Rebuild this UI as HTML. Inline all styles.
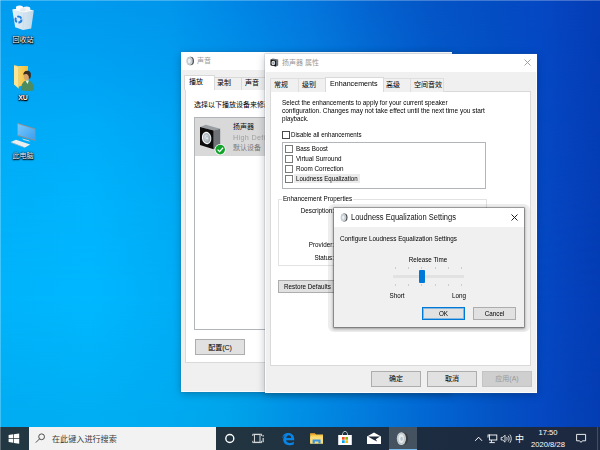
<!DOCTYPE html>
<html lang="zh-CN">
<head>
<meta charset="utf-8">
<title>Desktop</title>
<style>
*{box-sizing:border-box;margin:0;padding:0}
html,body{width:600px;height:450px;overflow:hidden;background:#0a6fd8}
body{font-family:"Liberation Sans","Noto Sans CJK SC",sans-serif;font-size:7px;color:#1a1a1a;position:relative}
.abs{position:absolute}
svg{position:absolute;overflow:visible}
#wall{position:absolute;left:0;top:0;width:600px;height:450px}
.t{position:absolute;white-space:nowrap;line-height:9px;font-size:7px;transform:scaleX(.9);transform-origin:0 0;color:#000}
.t.r{transform-origin:100% 0;text-align:right}
.t.c{transform-origin:50% 0;text-align:center}
.cj{position:absolute;white-space:nowrap;line-height:9px;font-size:7px;color:#000}
.lbl{position:absolute;color:#fff;font-size:7px;line-height:9px;text-align:center;width:46px;text-shadow:0 0 1.5px rgba(0,0,0,1),0 1px 1.5px rgba(0,0,0,1),0 0 1px rgba(0,0,0,1),.5px .5px 1px rgba(0,0,0,.9);white-space:nowrap}
.win{position:absolute;background:#f0f0f0}
.btn{position:absolute;border:1px solid #adadad;background:#e1e1e1}
.cb{position:absolute;width:8px;height:8px;border:1px solid #7a7a7a;background:#fff}
</style>
</head>
<body>
<div id="wall">
<svg width="600" height="450" viewBox="0 0 600 450">
<defs>
<linearGradient id="gt" x1="0" y1="0" x2="1" y2="0"><stop offset="0.0000" stop-color="#009cef"/><stop offset="0.1500" stop-color="#009aee"/><stop offset="0.2833" stop-color="#0096ec"/><stop offset="0.4167" stop-color="#0084e4"/><stop offset="0.5167" stop-color="#0376dc"/><stop offset="0.6167" stop-color="#0364d0"/><stop offset="0.7167" stop-color="#0455c6"/><stop offset="0.8333" stop-color="#034cc2"/><stop offset="0.9000" stop-color="#0548c4"/><stop offset="0.9500" stop-color="#0542bc"/><stop offset="1.0000" stop-color="#043db5"/></linearGradient>
<linearGradient id="gm" x1="0" y1="0" x2="1" y2="0"><stop offset="0.0000" stop-color="#00b4fb"/><stop offset="0.1500" stop-color="#00b8ff"/><stop offset="0.2833" stop-color="#00aef7"/><stop offset="0.3833" stop-color="#00a8f0"/><stop offset="0.5167" stop-color="#0092e8"/><stop offset="0.6167" stop-color="#027ede"/><stop offset="0.7167" stop-color="#0268d4"/><stop offset="0.8333" stop-color="#0452c4"/><stop offset="0.9000" stop-color="#0549c5"/><stop offset="0.9500" stop-color="#0542bc"/><stop offset="1.0000" stop-color="#043db5"/></linearGradient>
<linearGradient id="gb" x1="0" y1="0" x2="1" y2="0"><stop offset="0.0000" stop-color="#00acf2"/><stop offset="0.1500" stop-color="#00aef3"/><stop offset="0.2833" stop-color="#00aaf0"/><stop offset="0.3833" stop-color="#00a4ea"/><stop offset="0.5167" stop-color="#008ce4"/><stop offset="0.6167" stop-color="#027adc"/><stop offset="0.7167" stop-color="#0266d2"/><stop offset="0.8333" stop-color="#0452c4"/><stop offset="0.9000" stop-color="#0548c2"/><stop offset="0.9500" stop-color="#0442b8"/><stop offset="1.0000" stop-color="#043db3"/></linearGradient>
<linearGradient id="va" x1="0" y1="0" x2="0" y2="1"><stop offset="0.0000" stop-color="#fff" stop-opacity="1.000"/><stop offset="0.0133" stop-color="#fff" stop-opacity="1.000"/><stop offset="0.1200" stop-color="#fff" stop-opacity="0.800"/><stop offset="0.2756" stop-color="#fff" stop-opacity="0.400"/><stop offset="0.4533" stop-color="#fff" stop-opacity="0.130"/><stop offset="0.6667" stop-color="#fff" stop-opacity="0.000"/></linearGradient>
<linearGradient id="vb" x1="0" y1="0" x2="0" y2="1"><stop offset="0.6667" stop-color="#fff" stop-opacity="0.000"/><stop offset="0.9200" stop-color="#fff" stop-opacity="1.000"/><stop offset="1.0000" stop-color="#fff" stop-opacity="1.000"/></linearGradient>
<mask id="mka" maskUnits="userSpaceOnUse" x="0" y="0" width="600" height="450"><rect width="600" height="450" fill="url(#va)"/></mask>
<mask id="mkb" maskUnits="userSpaceOnUse" x="0" y="0" width="600" height="450"><rect width="600" height="450" fill="url(#vb)"/></mask>
</defs>
<rect width="600" height="450" fill="url(#gm)"/>
<rect width="600" height="450" fill="url(#gt)" mask="url(#mka)"/>
<rect width="600" height="450" fill="url(#gb)" mask="url(#mkb)"/>
</svg>
</div>

<div class="abs" style="left:0;top:0;width:600px;height:1px;background:rgba(255,255,255,.25)"></div>
<div class="abs" style="left:0;top:0;width:1px;height:427px;background:rgba(255,255,255,.25)"></div>
<!-- desktop icons -->
<svg id="dicons" style="left:0;top:0" width="60" height="165" viewBox="0 0 60 165">
<defs>
<linearGradient id="binG" x1="0" y1="0" x2="1" y2="0"><stop offset="0" stop-color="#f4f8fb"/><stop offset=".55" stop-color="#e3eaf0"/><stop offset="1" stop-color="#cfdbe6"/></linearGradient>
<linearGradient id="scrG" x1="0" y1="0" x2="1" y2="1"><stop offset="0" stop-color="#7cc8fa"/><stop offset="1" stop-color="#3a9ff0"/></linearGradient>
<linearGradient id="fldG" x1="0" y1="0" x2="1" y2="0"><stop offset="0" stop-color="#fbd466"/><stop offset="1" stop-color="#f3bf3c"/></linearGradient>
</defs>
<!-- recycle bin -->
<g>
<path d="M12.3 9.6 L22.5 8 L33.8 10.4 L31.2 28.6 L23 30 L15.2 27.2 Z" fill="url(#binG)" opacity=".93"/>
<path d="M12.3 9.6 L22.5 8 L33.8 10.4 L24 12.4 Z" fill="#ffffff" opacity=".85"/>
<ellipse cx="19.5" cy="8" rx="3.6" ry="2.4" fill="#fff"/>
<ellipse cx="26.5" cy="8.8" rx="3.8" ry="2.3" fill="#f3f6f8"/>
<ellipse cx="23" cy="9.8" rx="3" ry="1.8" fill="#e6ebef"/>
<path d="M24 12.4 L23 30" stroke="#c9d5e0" stroke-width=".5" fill="none"/>
<circle cx="18.5" cy="19.6" r="3" fill="none" stroke="#1f7fe6" stroke-width="2" stroke-dasharray="4.7 1.58"/>
</g>
<!-- user folder -->
<g>
<path d="M18.2 66 L28 66 L28 85 L18.2 86.5 Z" fill="url(#fldG)"/>
<path d="M14 65.2 L18.6 66.4 L18.6 88.6 L14 84.6 Z" fill="#fde594"/>
<path d="M14 65.2 L18.6 66.4 L18.6 88.6" fill="none" stroke="#f0c552" stroke-width=".4"/>
<path d="M21 90.2 C21 84 23.5 80.2 27.4 80.2 C31.4 80.2 34 84 34 90.2 C30 91.2 25 91.2 21 90.2 Z" fill="#4d8c5e"/>
<path d="M25.6 80.6 L27.4 84 L29 80.6 Z" fill="#eef3ee"/>
<ellipse cx="26.8" cy="76.4" rx="3.1" ry="3.6" fill="#d7a46a"/>
<path d="M23.4 75 C23 72.4 25 70.6 27.4 70.8 C30.4 70.8 31.6 73.4 30.6 77.6 C30 78.6 29.4 79 28.8 79 C29.2 77 28.6 75.2 27.2 74.2 C26 73.8 24.6 74 23.4 75 Z" fill="#3a2c22"/>
</g>
<!-- this pc -->
<g>
<path d="M17 122.8 L35.6 128.6 L35.6 141 L17 135.8 Z" fill="#8c8f92"/>
<path d="M17.9 124 L34.8 129.3 L34.8 139.8 L17.9 135 Z" fill="url(#scrG)"/>
<path d="M22 138.4 L28.6 140.2 L30.4 141.8 L23.6 140 Z" fill="#d6d9dc"/>
<path d="M10.8 142 L16 139.8 L30.2 144.6 L25 147.4 Z" fill="#eceeef"/>
<path d="M10.8 142 L25 147.4 L25 148 L10.8 142.7 Z" fill="#b9bdc1"/>
</g>
</svg>

<div class="lbl" style="left:0;top:35px">回收站</div>
<div class="lbl" style="left:0;top:93px;font-weight:bold">XU</div>
<div class="lbl" style="left:0;top:151px">此电脑</div>

<!-- Sound window -->
<div class="win" id="w1" style="left:181px;top:52px;width:271px;height:340px;box-shadow:inset 0 0 0 1px #fbfbfb,0 0 0 .5px rgba(70,100,140,.3),0 2px 8px rgba(0,0,0,.25)">
  <div class="abs" style="left:0;top:0;width:271px;height:18px;background:#fff"></div>
  <svg style="left:4px;top:4px" width="10" height="10" viewBox="0 0 10 10"><ellipse cx="5.4" cy="5" rx="3.6" ry="4.3" fill="#4a4f54"/><ellipse cx="4.5" cy="5" rx="3.2" ry="4.1" fill="#cfd6da"/><ellipse cx="4.3" cy="5" rx="2" ry="2.8" fill="#eef1f3" stroke="#9aa4aa" stroke-width=".4"/></svg>
  <div class="cj" style="left:16px;top:4px;color:#999">声音</div>
  <div class="abs" style="left:4px;top:37px;width:262px;height:274px;background:#fff;border:1px solid #d9d9d9"></div>
  <div class="abs" style="left:33px;top:25px;width:80px;height:13px;border:1px solid #d9d9d9;border-bottom:none;background:#f0f0f0"></div>
  <div class="abs" style="left:60px;top:25px;width:1px;height:13px;background:#d9d9d9"></div>
  <div class="abs" style="left:87px;top:25px;width:1px;height:13px;background:#d9d9d9"></div>
  <div class="abs" style="left:3px;top:23px;width:31px;height:15px;border:1px solid #d9d9d9;border-bottom:none;background:#fff"></div>
  <div class="cj" style="left:8px;top:25px">播放</div>
  <div class="cj" style="left:36px;top:26px">录制</div>
  <div class="cj" style="left:64px;top:26px">声音</div>
  <div class="cj" style="left:13px;top:48px">选择以下播放设备来修改其设置:</div>
  <div class="abs" style="left:13px;top:65px;width:245px;height:213px;border:1px solid #b2b6ba;background:#fff"></div>
  <div class="abs" style="left:14px;top:66px;width:243px;height:38px;background:#d9d9d9"></div>
  
  <svg style="left:17px;top:71px" width="30" height="34" viewBox="198 123 30 34">
  <defs><radialGradient id="coneG" cx=".45" cy=".45" r=".6"><stop offset="0" stop-color="#f4f7f9"/><stop offset=".55" stop-color="#b9c4cb"/><stop offset="1" stop-color="#8a959c"/></radialGradient></defs>
  <path d="M200 127 L205.8 124.8 L220.2 128.8 L213.6 130.6 Z" fill="#9a9ea2"/>
  <path d="M213.6 130.6 L220.2 128.8 L220.2 145.4 L213.6 149.2 Z" fill="#6f7377"/>
  <path d="M200 127 L213.6 130.6 L213.6 149.2 L200 145 Z" fill="#0c0c0c"/>
  <ellipse cx="206.6" cy="138" rx="4.7" ry="6.2" fill="#f2f4f5" transform="rotate(-8 206.6 138)"/>
  <ellipse cx="206.7" cy="138" rx="3.6" ry="5" fill="url(#coneG)" transform="rotate(-8 206.7 138)"/>
  <ellipse cx="207" cy="138.2" rx="1.3" ry="1.8" fill="#e9eef1" stroke="#7f8a91" stroke-width=".4"/>
  <circle cx="220.2" cy="149.6" r="5.6" fill="#fff"/>
  <circle cx="220.2" cy="149.6" r="4.8" fill="#12a32a"/>
  <path d="M217.6 149.6 L219.6 151.6 L223 147.8" fill="none" stroke="#fff" stroke-width="1.3"/>
  </svg>
  <div class="cj" style="left:52px;top:70px;color:#111">扬声器</div>
  <div class="t" style="left:52px;top:81px;color:#a0a0a0;font-size:8px;letter-spacing:.35px">High Definition Audio</div>
  <div class="cj" style="left:52px;top:91px;color:#7a7a7a">默认设备</div>
  <div class="btn" style="left:14px;top:287px;width:50px;height:16px"></div>
  <div class="cj" style="left:14px;width:50px;text-align:center;top:291px">配置(C)</div>
</div>

<!-- Properties window -->
<div class="win" id="w2" style="left:265px;top:54px;width:272px;height:339px;box-shadow:inset 0 0 0 1px #fbfbfb,0 0 0 .5px rgba(70,100,140,.3),0 2px 8px rgba(0,0,0,.25)">
  <div class="abs" style="left:0;top:0;width:272px;height:18px;background:#fff"></div>
  <svg style="left:5px;top:4px" width="9" height="9" viewBox="0 0 9 9"><path d="M0.6 1.6 L2.8 0.4 L8.2 1.4 L8.2 7.4 L6 8.6 L0.6 7.2 Z" fill="#6a6e72"/><path d="M0.6 1.6 L6 2.8 L6 8.6 L0.6 7.2 Z" fill="#141414"/><ellipse cx="3.3" cy="5" rx="1.9" ry="2.3" fill="#dfe4e7"/><ellipse cx="3.4" cy="5" rx="1" ry="1.3" fill="#9aa7ae"/></svg>
  <div class="cj" style="left:17px;top:4px;color:#999">扬声器 属性</div>
  <svg style="left:259px;top:5px" width="7" height="7" viewBox="0 0 7 7"><path d="M0.5 0.5L6.5 6.5M6.5 0.5L0.5 6.5" stroke="#999" stroke-width="0.9" fill="none"/></svg>
  <div class="abs" style="left:5px;top:37px;width:261px;height:275px;background:#fff;border:1px solid #d9d9d9"></div>
  <div class="abs" style="left:5px;top:24px;width:174px;height:14px;border:1px solid #dedede;border-bottom:none;background:#f0f0f0"></div>
  <div class="abs" style="left:33px;top:24px;width:1px;height:14px;background:#dedede"></div>
  <div class="abs" style="left:145px;top:24px;width:1px;height:14px;background:#dedede"></div>
  <div class="abs" style="left:60px;top:23px;width:59px;height:15px;border:1px solid #d9d9d9;border-bottom:none;background:#fff"></div>
  <div class="cj" style="left:9px;top:26px">常规</div>
  <div class="cj" style="left:37px;top:26px">级别</div>
  <div class="t" style="left:65px;top:25px;font-size:7.5px;transform:scaleX(.95)">Enhancements</div>
  <div class="cj" style="left:121px;top:26px">高级</div>
  <div class="cj" style="left:149px;top:26px">空间音效</div>

  <div class="t" style="left:17px;top:45px;line-height:8px;transform:scaleX(.911)">Select the enhancements to apply for your current speaker</div><div class="t" style="left:17px;top:53px;line-height:8px;transform:scaleX(.928)">configuration. Changes may not take effect until the next time you start</div><div class="t" style="left:17px;top:61px;line-height:8px">playback.</div>
  <div class="cb" style="left:17px;top:77px;border-color:#4a4a4a"></div>
  <div class="t" style="left:26px;top:76px;transform:scaleX(.88)">Disable all enhancements</div>
  <div class="abs" style="left:17px;top:88px;width:204px;height:47px;border:1px solid #b2b6ba;background:#fff"></div>
  <div class="abs" style="left:29px;top:120px;width:66px;height:9px;background:#ececec"></div>
  <div class="cb" style="left:20px;top:91px"></div><div class="t" style="left:31px;top:90px">Bass Boost</div>
  <div class="cb" style="left:20px;top:101px"></div><div class="t" style="left:31px;top:100px">Virtual Surround</div>
  <div class="cb" style="left:20px;top:111px"></div><div class="t" style="left:31px;top:110px">Room Correction</div>
  <div class="cb" style="left:20px;top:121px"></div><div class="t" style="left:31px;top:120px;transform:scaleX(.875)">Loudness Equalization</div>

  <div class="abs" style="left:13px;top:145px;width:209px;height:67px;border:1px solid #e2e2e2;background:#fff"></div>
  <div class="t" style="left:17px;top:140px;background:#fff;padding:0 1px">Enhancement Properties</div>
  <div class="t r" style="left:0;width:69px;top:152px">Description:</div>
  
  <div class="t r" style="left:0;width:69px;top:186px">Provider:</div>
  <div class="t r" style="left:0;width:69px;top:199px">Status:</div>
  <div class="btn" style="left:13px;top:226px;width:64px;height:13px"></div>
  <div class="t" style="left:19px;top:228px">Restore Defaults</div>

  <div class="btn" style="left:106px;top:317px;width:50px;height:16px"></div>
  <div class="cj" style="left:106px;width:50px;text-align:center;top:320px">确定</div>
  <div class="btn" style="left:162px;top:317px;width:50px;height:16px"></div>
  <div class="cj" style="left:162px;width:50px;text-align:center;top:320px">取消</div>
  <div class="btn" style="left:217px;top:317px;width:50px;height:16px;border-color:#c4c4c4;background:#cfcfcf"></div>
  <div class="cj" style="left:217px;width:50px;text-align:center;top:320px;color:#999">应用(A)</div>
</div>

<!-- Loudness dialog -->
<div class="abs" style="left:327.5px;top:204px;width:202.5px;height:127.5px;border-radius:6px;background:rgba(0,0,0,.07);filter:blur(.7px)"></div>
<div class="win" id="w3" style="left:334px;top:208px;width:190px;height:119px;box-shadow:0 0 0 .6px rgba(80,80,80,.7),0 1px 2.5px 1px rgba(0,0,0,.35)">
  <div class="abs" style="left:0;top:0;width:190px;height:19px;background:#fff"></div>
  <div class="abs" style="left:0;top:1px;width:190px;height:118px">
  <svg style="left:6px;top:4px" width="8" height="9" viewBox="0 0 8 9"><ellipse cx="4.3" cy="4.5" rx="3.2" ry="4" fill="#3e4348"/><ellipse cx="3.5" cy="4.5" rx="2.9" ry="3.8" fill="#cdd4d8"/><ellipse cx="3.3" cy="4.5" rx="1.7" ry="2.5" fill="#eef1f3" stroke="#9aa4aa" stroke-width=".4"/></svg>
  <div class="t" style="left:17px;top:4px;font-size:8.5px;color:#111;transform:scaleX(.885)">Loudness Equalization Settings</div>
  <svg style="left:177px;top:5px" width="7" height="7" viewBox="0 0 7 7"><path d="M0.5 0.5L6.5 6.5M6.5 0.5L0.5 6.5" stroke="#222" stroke-width="1" fill="none"/></svg>
  <div class="t" style="left:6px;top:25px">Configure Loudness Equalization Settings</div>
  <div class="t c" style="left:59px;width:70px;top:46px">Release Time</div>
  <div class="abs" style="left:61.0px;top:58px;width:1px;height:2px;background:#cdcdcd"></div><div class="abs" style="left:61.0px;top:75px;width:1px;height:2px;background:#cdcdcd"></div><div class="abs" style="left:74.2px;top:58px;width:1px;height:2px;background:#cdcdcd"></div><div class="abs" style="left:74.2px;top:75px;width:1px;height:2px;background:#cdcdcd"></div><div class="abs" style="left:87.4px;top:58px;width:1px;height:2px;background:#cdcdcd"></div><div class="abs" style="left:87.4px;top:75px;width:1px;height:2px;background:#cdcdcd"></div><div class="abs" style="left:100.6px;top:58px;width:1px;height:2px;background:#cdcdcd"></div><div class="abs" style="left:100.6px;top:75px;width:1px;height:2px;background:#cdcdcd"></div><div class="abs" style="left:113.8px;top:58px;width:1px;height:2px;background:#cdcdcd"></div><div class="abs" style="left:113.8px;top:75px;width:1px;height:2px;background:#cdcdcd"></div><div class="abs" style="left:127.0px;top:58px;width:1px;height:2px;background:#cdcdcd"></div><div class="abs" style="left:127.0px;top:75px;width:1px;height:2px;background:#cdcdcd"></div>
  <div class="abs" style="left:59px;top:66px;width:71px;height:3px;background:#e2e2e2;border:0"></div>
  <div class="abs" style="left:84.5px;top:61px;width:6px;height:12.5px;background:#0078d7;border-radius:1px"></div>
  <div class="t c" style="left:50px;width:26px;top:82px">Short</div>
  <div class="t c" style="left:112px;width:26px;top:82px">Long</div>
  <div class="btn" style="left:88px;top:98px;width:43px;height:13px;border-color:#0078d7;box-shadow:inset 0 0 0 1px rgba(0,120,215,.4)"></div>
  <div class="t c" style="left:88px;width:43px;top:100px">OK</div>
  <div class="btn" style="left:139px;top:98px;width:43px;height:13px"></div>
  <div class="t c" style="left:139px;width:43px;top:100px">Cancel</div>
  </div>
</div>

<!-- Taskbar -->
<div class="abs" id="tb" style="left:0;top:427px;width:600px;height:23px;background:linear-gradient(90deg,#223842 0%,#213440 40%,#1c2b40 77%,#1c2840 100%)">
  <div class="abs" style="left:29px;top:0;width:187px;height:23px;background:#f2f2f2"></div>
  <div class="cj" style="left:52px;top:8px;font-size:8.1px;color:#3a3a3a">在此键入进行搜索</div>
  <div class="abs" style="left:389px;top:0;width:28px;height:23px;background:#45525f"></div>
  <div class="abs" style="left:389px;top:22px;width:28px;height:1px;background:#76b9ed"></div>
  <div class="abs" style="left:0;top:0;width:1px;height:23px;background:#5a6a72"></div>
  <svg style="left:0;top:0" width="600" height="23" viewBox="0 427 600 23">
  <!-- start -->
  <path d="M8.6 435 L13.2 434.3 L13.2 438.2 L8.6 438.2 Z M13.9 434.2 L19.2 433.4 L19.2 438.2 L13.9 438.2 Z M8.6 438.9 L13.2 438.9 L13.2 442.8 L8.6 442.1 Z M13.9 438.9 L19.2 438.9 L19.2 443.7 L13.9 442.9 Z" fill="#fff"/>
  <!-- search -->
  <circle cx="41.6" cy="436.8" r="2.9" fill="none" stroke="#3a3a3a" stroke-width=".9"/>
  <path d="M39.5 438.9 L35.8 442.6" stroke="#3a3a3a" stroke-width=".9" fill="none"/>
  <!-- cortana -->
  <circle cx="229.8" cy="438.5" r="4" fill="none" stroke="#fff" stroke-width="1.4"/>
  <!-- task view -->
  <rect x="254.4" y="434.6" width="5.6" height="7.6" fill="none" stroke="#e8e8e8" stroke-width=".9"/>
  <path d="M252.8 434.2 L252.8 436 M252.8 440.8 L252.8 442.6 M261.6 434.2 L261.6 436 M261.6 440.8 L261.6 442.6" stroke="#e8e8e8" stroke-width=".9"/>
  <path d="M252.6 434.2 L261.8 434.2 M252.6 442.6 L261.8 442.6" stroke="#e8e8e8" stroke-width=".8"/>
  <rect x="262.6" y="435.2" width="1.1" height="1.3" fill="#fff"/><rect x="262.6" y="438" width="1.1" height="4.2" fill="#e8e8e8"/>
  <!-- edge -->
  <path d="M282.2 438.4 C282.6 434.8 285.2 433 288.4 433 C291.8 433 294.2 435.4 294.2 439 L294.2 440.2 L286.2 440.2 C286.4 442 287.8 443 289.8 443 C291.2 443 292.6 442.6 293.8 441.8 L293.8 444.2 C292.6 444.9 291 445.3 289.2 445.3 C285.6 445.3 283.2 443 283.2 439.6 C283.2 437.6 284.2 435.9 285.8 434.9 C284.2 435.4 283 436.6 282.2 438.4 Z M286.3 437.9 L291.2 437.9 C291.1 436.3 290.2 435.3 288.8 435.3 C287.5 435.3 286.6 436.3 286.3 437.9 Z" fill="#0a84e4"/>
  <!-- explorer -->
  <path d="M310.2 433.4 L315 433.4 L315.8 434.4 L323 434.4 L323 443.6 L310.2 443.6 Z" fill="#f7c948"/>
  <rect x="310.2" y="433.4" width="4.8" height="1.2" fill="#e8961e"/>
  <path d="M310.2 436.4 L323 436.4 L323 443.6 L310.2 443.6 Z" fill="#fcdc78"/>
  <path d="M312.6 443.6 L312.6 439.4 L320.6 439.4 L320.6 443.6 L318.4 443.6 L318.4 441.4 L314.8 441.4 L314.8 443.6 Z" fill="#3a96e0"/>
  <!-- store -->
  <path d="M342.4 435.4 C342.4 432.6 343.6 431.4 345 431.4 C346.4 431.4 347.6 432.6 347.6 435.4" fill="none" stroke="#d8dde0" stroke-width=".8"/>
  <path d="M338.2 435 L351.8 435 L351.8 445 L338.2 445 Z" fill="#fff"/>
  <rect x="342" y="437" width="2.7" height="2.7" fill="#f25022"/><rect x="345.3" y="437" width="2.7" height="2.7" fill="#7fba00"/><rect x="342" y="440.3" width="2.7" height="2.7" fill="#00a4ef"/><rect x="345.3" y="440.3" width="2.7" height="2.7" fill="#ffb900"/>
  <!-- mail -->
  <path d="M367 436.6 L374 432.4 L381 436.6 L381 444 L367 444 Z" fill="#fff"/>
  <path d="M368 436.4 L380 436.4 L375.8 439.2 L377.2 441.6 L373 439.4 Z" fill="#1d2b3a"/>
  <!-- sound app -->
  <ellipse cx="403.6" cy="438.6" rx="4.6" ry="6.2" fill="#3a3d40"/>
  <ellipse cx="401.4" cy="438.6" rx="4.6" ry="6.4" fill="#c9d1d5"/>
  <ellipse cx="401.2" cy="438.6" rx="3.1" ry="4.8" fill="#e6ebee" stroke="#a2adb3" stroke-width=".5"/>
  <ellipse cx="401.6" cy="438.8" rx="1.3" ry="2.1" fill="#b8c6ce"/>
  <!-- chevron -->
  <path d="M475.2 440.8 L478.6 437.2 L482 440.8" fill="none" stroke="#fff" stroke-width="1"/>
  <!-- network -->
  <rect x="489.4" y="435" width="7.4" height="5" fill="none" stroke="#fff" stroke-width=".9"/>
  <path d="M488 435.4 L488 437.6 M487.6 435 L490 435 M491.4 440 L491.4 442.4 M489.4 442.6 L494.8 442.6" stroke="#fff" stroke-width=".9" fill="none"/>
  <!-- volume -->
  <path d="M501.2 437.4 L502.8 437.4 L505 435.2 L505 442.2 L502.8 440 L501.2 440 Z" fill="none" stroke="#fff" stroke-width=".8"/>
  <path d="M506.6 437 C507.2 438 507.2 439.4 506.6 440.4 M508.2 435.8 C509.4 437.6 509.4 439.8 508.2 441.6 M509.9 434.6 C511.7 437.2 511.7 440.2 509.9 442.8" fill="none" stroke="#fff" stroke-width=".8"/>
  <!-- notification -->
  <path d="M576.6 434.4 L585.6 434.4 L585.6 440.8 L582.4 440.8 L581 442.4 L579.6 440.8 L576.6 440.8 Z" fill="none" stroke="#fff" stroke-width=".9"/>
  <path d="M597.6 427 L597.6 450" stroke="#4a5868" stroke-width=".9"/>
  </svg>

  <div class="t c" style="left:528px;width:40px;top:1px;font-size:7.6px;color:#fff;transform:none">17:50</div>
  <div class="t c" style="left:528px;width:40px;top:13px;font-size:7.6px;color:#fff;transform:none">2020/8/28</div>
  <div class="cj" style="left:515px;top:6px;font-size:9px;color:#fff;line-height:12px">中</div>
</div>
</body>
</html>
